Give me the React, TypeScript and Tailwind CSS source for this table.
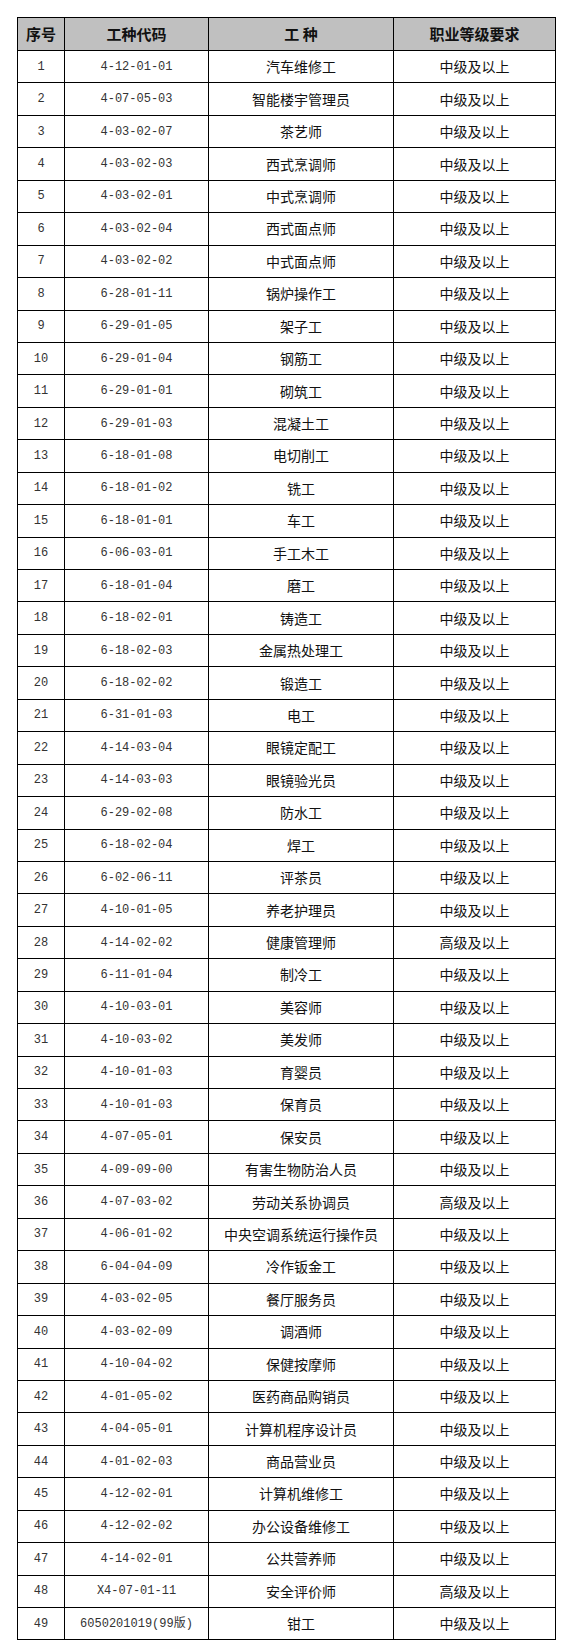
const rows: [string, string, string][] = [
  ["4-12-01-01", "汽车维修工", "中级及以上"],
  ["4-07-05-03", "智能楼宇管理员", "中级及以上"],
  ["4-03-02-07", "茶艺师", "中级及以上"],
  ["4-03-02-03", "西式烹调师", "中级及以上"],
  ["4-03-02-01", "中式烹调师", "中级及以上"],
  ["4-03-02-04", "西式面点师", "中级及以上"],
  ["4-03-02-02", "中式面点师", "中级及以上"],
  ["6-28-01-11", "锅炉操作工", "中级及以上"],
  ["6-29-01-05", "架子工", "中级及以上"],
  ["6-29-01-04", "钢筋工", "中级及以上"],
  ["6-29-01-01", "砌筑工", "中级及以上"],
  ["6-29-01-03", "混凝土工", "中级及以上"],
  ["6-18-01-08", "电切削工", "中级及以上"],
  ["6-18-01-02", "铣工", "中级及以上"],
  ["6-18-01-01", "车工", "中级及以上"],
  ["6-06-03-01", "手工木工", "中级及以上"],
  ["6-18-01-04", "磨工", "中级及以上"],
  ["6-18-02-01", "铸造工", "中级及以上"],
  ["6-18-02-03", "金属热处理工", "中级及以上"],
  ["6-18-02-02", "锻造工", "中级及以上"],
  ["6-31-01-03", "电工", "中级及以上"],
  ["4-14-03-04", "眼镜定配工", "中级及以上"],
  ["4-14-03-03", "眼镜验光员", "中级及以上"],
  ["6-29-02-08", "防水工", "中级及以上"],
  ["6-18-02-04", "焊工", "中级及以上"],
  ["6-02-06-11", "评茶员", "中级及以上"],
  ["4-10-01-05", "养老护理员", "中级及以上"],
  ["4-14-02-02", "健康管理师", "高级及以上"],
  ["6-11-01-04", "制冷工", "中级及以上"],
  ["4-10-03-01", "美容师", "中级及以上"],
  ["4-10-03-02", "美发师", "中级及以上"],
  ["4-10-01-03", "育婴员", "中级及以上"],
  ["4-10-01-03", "保育员", "中级及以上"],
  ["4-07-05-01", "保安员", "中级及以上"],
  ["4-09-09-00", "有害生物防治人员", "中级及以上"],
  ["4-07-03-02", "劳动关系协调员", "高级及以上"],
  ["4-06-01-02", "中央空调系统运行操作员", "中级及以上"],
  ["6-04-04-09", "冷作钣金工", "中级及以上"],
  ["4-03-02-05", "餐厅服务员", "中级及以上"],
  ["4-03-02-09", "调酒师", "中级及以上"],
  ["4-10-04-02", "保健按摩师", "中级及以上"],
  ["4-01-05-02", "医药商品购销员", "中级及以上"],
  ["4-04-05-01", "计算机程序设计员", "中级及以上"],
  ["4-01-02-03", "商品营业员", "中级及以上"],
  ["4-12-02-01", "计算机维修工", "中级及以上"],
  ["4-12-02-02", "办公设备维修工", "中级及以上"],
  ["4-14-02-01", "公共营养师", "中级及以上"],
  ["X4-07-01-11", "安全评价师", "高级及以上"],
  ["6050201019(99版)", "钳工", "中级及以上"],
];

const mono = "font-['Liberation_Mono','Noto_Sans_CJK_SC',monospace] text-[12px] text-[#333]";
const cjk = "font-['Noto_Sans_CJK_SC',sans-serif] text-[14px] text-[#111]";

export default function App() {
  return (
    <div className="min-h-screen bg-white pl-[17px] pt-[17px]">
      <table className="table-fixed border-collapse w-[538px] text-center">
        <colgroup>
          <col className="w-[47px]" />
          <col className="w-[144px]" />
          <col className="w-[185px]" />
          <col className="w-[162px]" />
        </colgroup>
        <thead>
          <tr className="h-[33px] bg-[#c0c0c0] font-['Noto_Sans_CJK_SC',sans-serif] text-[15px] font-bold text-[#111]">
            <th className="border border-black p-0">序号</th>
            <th className="border border-black p-0">工种代码</th>
            <th className="border border-black p-0 whitespace-pre">工 种</th>
            <th className="border border-black p-0">职业等级要求</th>
          </tr>
        </thead>
        <tbody>
          {rows.map((r, i) => (
            <tr key={i} className="h-[32.45px]">
              <td className={`border border-black p-0 ${mono}`}>{i + 1}</td>
              <td className={`border border-black p-0 ${mono}`}>{r[0]}</td>
              <td className={`border border-black p-0 ${cjk}`}>{r[1]}</td>
              <td className={`border border-black p-0 ${cjk}`}>{r[2]}</td>
            </tr>
          ))}
        </tbody>
      </table>
    </div>
  );
}
